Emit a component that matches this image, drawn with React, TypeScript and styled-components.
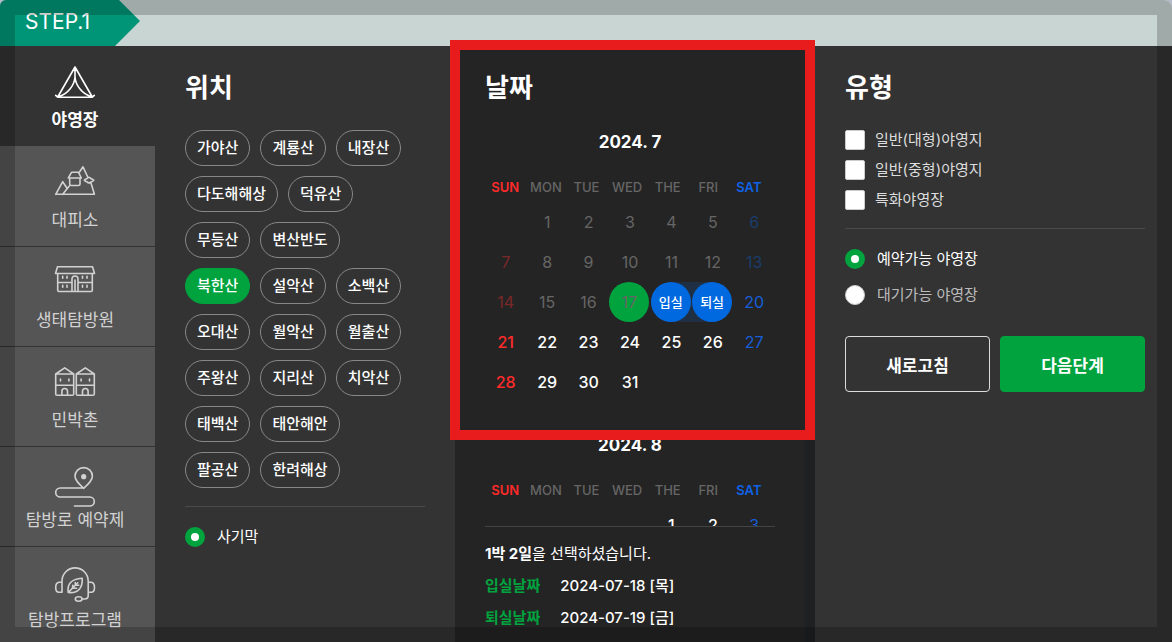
import React, { useState } from "react";
import styled, { createGlobalStyle, css } from "styled-components";

const GlobalStyle = createGlobalStyle`
  * { box-sizing: border-box; }
  body {
    margin: 0;
    background: #e2eaf8;
    font-family: Inter, "Noto Sans CJK KR", sans-serif;
    font-size: 15px;
    color: #fff;
  }
  button, input { font: inherit; color: inherit; }
  h1, h2, h3, p, dl, dd { margin: 0; padding: 0; }
`;

const Page = styled.div`
  position: relative;
  display: flex;
  flex-direction: column;
  height: 100vh;
  overflow: hidden;
`;

const Shade = styled.div`
  position: fixed;
  inset: 0;
  border: 15px solid rgba(0, 0, 0, 0.2);
  pointer-events: none;
  z-index: 3;
`;

const StepBar = styled.header`
  flex: none;
  height: 46px;
  background: #c9d5d3;
  border-radius: 6px 9px 0 0;
  overflow: hidden;
`;

const StepTag = styled.h1`
  width: 140px;
  height: 46px;
  padding-left: 25px;
  background: #009577;
  clip-path: polygon(0 0, 119px 0, 140px 21px, 115px 46px, 0 46px);
  font-size: 21px;
  font-weight: 400;
  line-height: 44px;
`;

const Columns = styled.main`
  flex: 1;
  min-height: 0;
  display: grid;
  grid-template-columns: 155px 300fr 360fr 357fr;
  background: #333;
`;

const SideNav = styled.nav`
  display: flex;
  flex-direction: column;
`;

const SideLink = styled.a<{ $active?: boolean }>`
  flex: none;
  display: flex;
  flex-direction: column;
  align-items: center;
  height: 100px;
  padding: 20px 5px 0 0;
  background: ${(p) => (p.$active ? "#333" : "#555")};
  color: ${(p) => (p.$active ? "#fff" : "#d2d2d2")};
  font-size: 17px;
  font-weight: ${(p) => (p.$active ? 700 : 400)};
  line-height: 28px;
  text-decoration: none;
  & + & + & {
    box-shadow: inset 0 1px 0 #333;
  }
`;

const NavIcon = styled.svg`
  display: block;
  width: 40px;
  height: 40px;
  overflow: visible;
  fill: none;
  stroke: currentColor;
  stroke-width: 1.6;
  stroke-linejoin: round;
  stroke-linecap: round;
`;

const Panel = styled.section`
  padding: 22px 30px 0;
  min-width: 0;
`;

const TypePanel = styled(Panel)`
  padding-right: 27px;
`;

const DatePanel = styled(Panel)`
  position: relative;
  background: #242424;
  border-right: 10px solid #1e2021;
`;

const Highlight = styled.div`
  position: absolute;
  top: -6px;
  left: -5px;
  right: -10px;
  height: 400px;
  border: 10px solid #e81c1c;
  pointer-events: none;
  z-index: 2;
`;

const PanelTitle = styled.h2`
  font-size: 26px;
  font-weight: 700;
  line-height: 40px;
`;

const ChipList = styled.div`
  display: flex;
  flex-direction: column;
  gap: 10px;
  margin-top: 22px;
`;

const ChipRow = styled.div`
  display: flex;
  gap: 10px;
`;

const Chip = styled.button<{ $active: boolean }>`
  flex: none;
  height: 36px;
  padding: 0 11px;
  border: 1px solid ${(p) => (p.$active ? "#00a33e" : "#888")};
  border-radius: 18px;
  background: ${(p) => (p.$active ? "#00a33e" : "transparent")};
  font-size: 15px;
  font-weight: 500;
  line-height: 34px;
  white-space: nowrap;
  cursor: pointer;
`;

const Divider = styled.hr`
  height: 1px;
  margin: 18px 0 20px;
  border: 0;
  background: #4a4a4a;
`;

const OptionList = styled.div<{ $gap: number; $top?: number }>`
  display: flex;
  flex-direction: column;
  gap: ${(p) => p.$gap}px;
  margin-top: ${(p) => p.$top ?? 0}px;
`;

const Option = styled.label<{ $tone: string; $gap: number }>`
  display: flex;
  align-items: center;
  gap: ${(p) => p.$gap}px;
  height: 20px;
  line-height: 20px;
  color: ${(p) => p.$tone};
  white-space: nowrap;
`;

const mark = css`
  appearance: none;
  flex: none;
  width: 20px;
  height: 20px;
  margin: 0;
  background: #fff;
`;

const Check = styled.input`
  ${mark}
  border: 1px solid #ccc;
  border-radius: 2px;
  &:checked { background: #00a33e; }
`;

const Radio = styled.input`
  ${mark}
  border: 1px solid #ccc;
  border-radius: 50%;
  &:checked { border: 6px solid #00a33e; }
`;

const Actions = styled.div`
  display: grid;
  grid-template-columns: 1fr 1fr;
  gap: 10px;
  margin-top: 31px;
`;

const ActionButton = styled.button<{ $primary?: boolean }>`
  height: 56px;
  padding: 0;
  border: 1px solid ${(p) => (p.$primary ? "#00a33e" : "#ddd")};
  border-radius: 4px;
  background: ${(p) => (p.$primary ? "#00a33e" : "transparent")};
  font-size: 17px;
  font-weight: 700;
  cursor: pointer;
`;

const Months = styled.div`
  height: 418px;
  overflow: hidden;
`;

const Month = styled.section`
  padding: 18px 0 9px;
`;

const MonthTitle = styled.h3`
  font-size: 17px;
  font-weight: 700;
  line-height: 32px;
  text-align: center;
`;

const Calendar = styled.table`
  display: block;
  margin-top: 14px;
  thead, tbody { display: block; }
  tr { display: flex; }
`;

const dayTone = { sun: "#ff2a2a", sat: "#0f62e6", week: "#666" };

const Weekday = styled.th<{ $tone: keyof typeof dayTone }>`
  width: 14%;
  padding: 0;
  color: ${(p) => dayTone[p.$tone]};
  font-size: 13px;
  font-weight: ${(p) => (p.$tone === "week" ? 500 : 600)};
  line-height: 30px;
`;

const DayCell = styled.td<{ $range?: "start" | "end" }>`
  width: calc(100% / 7);
  height: 40px;
  padding: 0;
  ${(p) =>
    p.$range &&
    css`
      background: linear-gradient(
        to ${p.$range === "start" ? "right" : "left"},
        transparent 50%,
        #1f3045 50%
      );
    `}
`;

const Day = styled.button<{ $tone: string; $strong: boolean }>`
  display: block;
  width: 100%;
  height: 40px;
  padding: 0;
  border: 0;
  background: none;
  color: ${(p) => p.$tone};
  font-size: 16px;
  font-weight: ${(p) => (p.$strong ? 500 : 400)};
  line-height: 40px;
`;

const RoundDay = styled(Day)<{ $fill: string; $small?: boolean }>`
  width: 40px;
  border-radius: 50%;
  background: ${(p) => p.$fill};
  font-size: ${(p) => (p.$small ? 13 : 16)}px;
`;

const Summary = styled.div`
  padding-top: 11px;
  border-top: 1px solid #444;
  line-height: 32px;
  white-space: nowrap;
`;

const SummaryRow = styled.dl`
  display: flex;
  gap: 20px;
  dt { color: #00a33e; font-weight: 700; }
  dd { font-weight: 500; }
`;

const TentIcon = () => (
  <NavIcon viewBox="0 0 40 40" aria-hidden="true">
    <path d="M20 1 3 30.500M20 1l17 29.500M.7 29.300l2 1.900h34.600l2-1.900M20 1v10C19.500 19 13 28 4 30.500M20 11c.5 8 7 17 16 19.500" />
  </NavIcon>
);

const ShelterIcon = () => (
  <NavIcon viewBox="0 0 40 40" aria-hidden="true">
    <path d="M.7 28.300h38.700L36 17M.7 28.300l7-12.600 4 6M7.700 28.300l6.600-8.300M24.500 6 28 .8l4.500 9.700M13.300 12l3.200-5.700h7L26.300 12zM14.700 12v6q0 1.500 1.500 1.500h7.300q1.500 0 1.500-1.500v-6M29.300 14.300q1-1.300 2.400-1.500 2.300-2.800 4.400 0 1.500.2 2.700 1.500-1.300 1.300-2.500 1.500-2.300 2-4.400 0-1.500-.2-2.600-1.500z" />
  </NavIcon>
);

const LodgeIcon = () => (
  <NavIcon viewBox="0 0 40 40" aria-hidden="true">
    <path d="M2.500.7h35l2 6.800H.5zM2.700 7.500v16.700q0 1.300 1.300 1.300h32q1.300 0 1.300-1.300V7.500M2.700 16.500h14M23 16.500h14.300M17 25.500V13a3 3 0 0 1 6 0v12.500M20 14v11.500M7.700 10.300v2M12 10.300v2M27.500 10.300v2M32 10.300v2M7.700 19.300v2M12 19.300v2M27.500 19.300v2M32 19.300v2" />
  </NavIcon>
);

const housePath =
  "M.7 8 9.700 1.800 18.700 8zM.7 8v20q0 1.300 1.300 1.300h15.400q1.300 0 1.300-1.300V8M.7 19.300h18M6.900 29.300v-4a2.800 2.800 0 0 1 5.600 0v4M5.500 13v2M13.900 13v2";

const VillageIcon = () => (
  <NavIcon viewBox="0 0 40 40" aria-hidden="true">
    <path d={housePath} />
    <path d={housePath} transform="translate(20.600 0)" />
  </NavIcon>
);

const TrailIcon = () => (
  <NavIcon viewBox="0 0 40 40" aria-hidden="true">
    <path d="M28.700 22.300C24 18 20 14.500 20 10.300a8.700 8.700 0 0 1 17.400 0c0 4.200-4 7.700-8.700 12zM28.700 22H5.200a4.500 4.500 0 0 0 0 9h29.600a4.500 4.500 0 0 1 0 9H19.500" />
    <circle cx="28.700" cy="10.700" r="1.800" fill="currentColor" />
  </NavIcon>
);

const ProgramIcon = () => (
  <NavIcon viewBox="0 0 40 40" aria-hidden="true">
    <path d="M7 26.300V15a13 13 0 0 1 26.200 0v14.500q0 3.500-3.500 3.500h-2.500M7 16.300H4q-3.300.5-3.300 5.200T4 26.300h3M33.200 16.300h3q3.300.5 3.300 5.200t-3.300 4.800h-3" />
    <ellipse cx="23.700" cy="33" rx="3.400" ry="2.200" />
    <path d="M13.200 26.500c-1-8 2-13.500 14-14.300.5 8.500-3 15.500-14 14.300zM13.200 26.500l9.600-9.700M17.500 22.200l.3-3M17.500 22.200h4M20.300 19.300V16.500M20.300 19.300h3.500" />
  </NavIcon>
);

const navItems = [
  { label: "야영장", Icon: TentIcon },
  { label: "대피소", Icon: ShelterIcon },
  { label: "생태탐방원", Icon: LodgeIcon },
  { label: "민박촌", Icon: VillageIcon },
  { label: "탐방로 예약제", Icon: TrailIcon },
  { label: "탐방프로그램", Icon: ProgramIcon },
];

const parks = [
  ["가야산", "계룡산", "내장산"],
  ["다도해해상", "덕유산"],
  ["무등산", "변산반도"],
  ["북한산", "설악산", "소백산"],
  ["오대산", "월악산", "월출산"],
  ["주왕산", "지리산", "치악산"],
  ["태백산", "태안해안"],
  ["팔공산", "한려해상"],
];

const weekdays = ["SUN", "MON", "TUE", "WED", "THE", "FRI", "SAT"];

function weeksOf(offset: number, days: number) {
  const cells = Array.from({ length: Math.ceil((offset + days) / 7) * 7 }, (_, i) => {
    const d = i - offset + 1;
    return d >= 1 && d <= days ? d : null;
  });
  return Array.from({ length: cells.length / 7 }, (_, w) => cells.slice(w * 7, w * 7 + 7));
}

const toneOf = (col: number, past: boolean) => {
  if (col === 0) return past ? "#7c2828" : "#ff2a2a";
  if (col === 6) return past ? "#1a3d6c" : "#155fdb";
  return past ? "#666" : "#fff";
};

type MonthProps = {
  title: string;
  offset: number;
  days: number;
  weeks?: number;
  today?: number;
  checkIn?: number;
  checkOut?: number;
};

function MonthView({ title, offset, days, weeks = 6, today = 0, checkIn, checkOut }: MonthProps) {
  return (
    <Month>
      <MonthTitle>{title}</MonthTitle>
      <Calendar aria-label={title}>
        <thead>
          <tr>
            {weekdays.map((d, i) => (
              <Weekday key={d} scope="col" $tone={i === 0 ? "sun" : i === 6 ? "sat" : "week"}>
                {d}
              </Weekday>
            ))}
          </tr>
        </thead>
        <tbody>
          {weeksOf(offset, days).slice(0, weeks).map((week, w) => (
            <tr key={w}>
              {week.map((d, col) => {
                if (d === null) return <DayCell key={col} />;
                const past = d <= today;
                if (d === checkIn || d === checkOut)
                  return (
                    <DayCell key={col} $range={d === checkIn ? "start" : "end"}>
                      <RoundDay type="button" $fill="#0069e0" $small $tone="#fff" $strong>
                        {d === checkIn ? "입실" : "퇴실"}
                      </RoundDay>
                    </DayCell>
                  );
                if (d === today)
                  return (
                    <DayCell key={col}>
                      <RoundDay type="button" $fill="#00a33e" $tone="#666" $strong={false}>
                        {d}
                      </RoundDay>
                    </DayCell>
                  );
                return (
                  <DayCell key={col}>
                    <Day type="button" disabled={past} $tone={toneOf(col, past)} $strong={!past && col !== 6}>
                      {d}
                    </Day>
                  </DayCell>
                );
              })}
            </tr>
          ))}
        </tbody>
      </Calendar>
    </Month>
  );
}

export default function App() {
  const [park, setPark] = useState("북한산");
  const [status, setStatus] = useState("예약가능 야영장");

  return (
    <Page>
      <GlobalStyle />
      <StepBar>
        <StepTag>STEP.1</StepTag>
      </StepBar>
      <Columns>
        <SideNav>
          {navItems.map(({ label, Icon }, i) => (
            <SideLink key={label} href="#" $active={i === 0}>
              <Icon />
              {label}
            </SideLink>
          ))}
        </SideNav>

        <Panel>
          <PanelTitle>위치</PanelTitle>
          <ChipList>
            {parks.map((row) => (
              <ChipRow key={row[0]}>
                {row.map((name) => (
                  <Chip
                    key={name}
                    type="button"
                    $active={name === park}
                    aria-pressed={name === park}
                    onClick={() => setPark(name)}
                  >
                    {name}
                  </Chip>
                ))}
              </ChipRow>
            ))}
          </ChipList>
          <Divider />
          <Option $tone="#fff" $gap={12}>
            <Radio type="radio" name="site" defaultChecked />
            사기막
          </Option>
        </Panel>

        <DatePanel>
          <PanelTitle>날짜</PanelTitle>
          <Months>
            <MonthView title="2024. 7" offset={1} days={31} today={17} checkIn={18} checkOut={19} />
            <MonthView title="2024. 8" offset={4} days={31} weeks={1} />
          </Months>
          <Summary>
            <p>
              <strong>1박 2일</strong>을 선택하셨습니다.
            </p>
            <SummaryRow>
              <dt>입실날짜</dt>
              <dd>2024-07-18 [목]</dd>
            </SummaryRow>
            <SummaryRow>
              <dt>퇴실날짜</dt>
              <dd>2024-07-19 [금]</dd>
            </SummaryRow>
          </Summary>
          <Highlight />
        </DatePanel>

        <TypePanel>
          <PanelTitle>유형</PanelTitle>
          <OptionList $gap={10} $top={22}>
            {["일반(대형)야영지", "일반(중형)야영지", "특화야영장"].map((name) => (
              <Option key={name} $tone="#ddd" $gap={10}>
                <Check type="checkbox" />
                {name}
              </Option>
            ))}
          </OptionList>
          <Divider />
          <OptionList $gap={16}>
            {["예약가능 야영장", "대기가능 야영장"].map((name) => (
              <Option key={name} $tone={name === status ? "#fff" : "#bbb"} $gap={12}>
                <Radio
                  type="radio"
                  name="status"
                  checked={name === status}
                  onChange={() => setStatus(name)}
                />
                {name}
              </Option>
            ))}
          </OptionList>
          <Actions>
            <ActionButton type="button">새로고침</ActionButton>
            <ActionButton type="button" $primary>
              다음단계
            </ActionButton>
          </Actions>
        </TypePanel>
      </Columns>
      <Shade />
    </Page>
  );
}
